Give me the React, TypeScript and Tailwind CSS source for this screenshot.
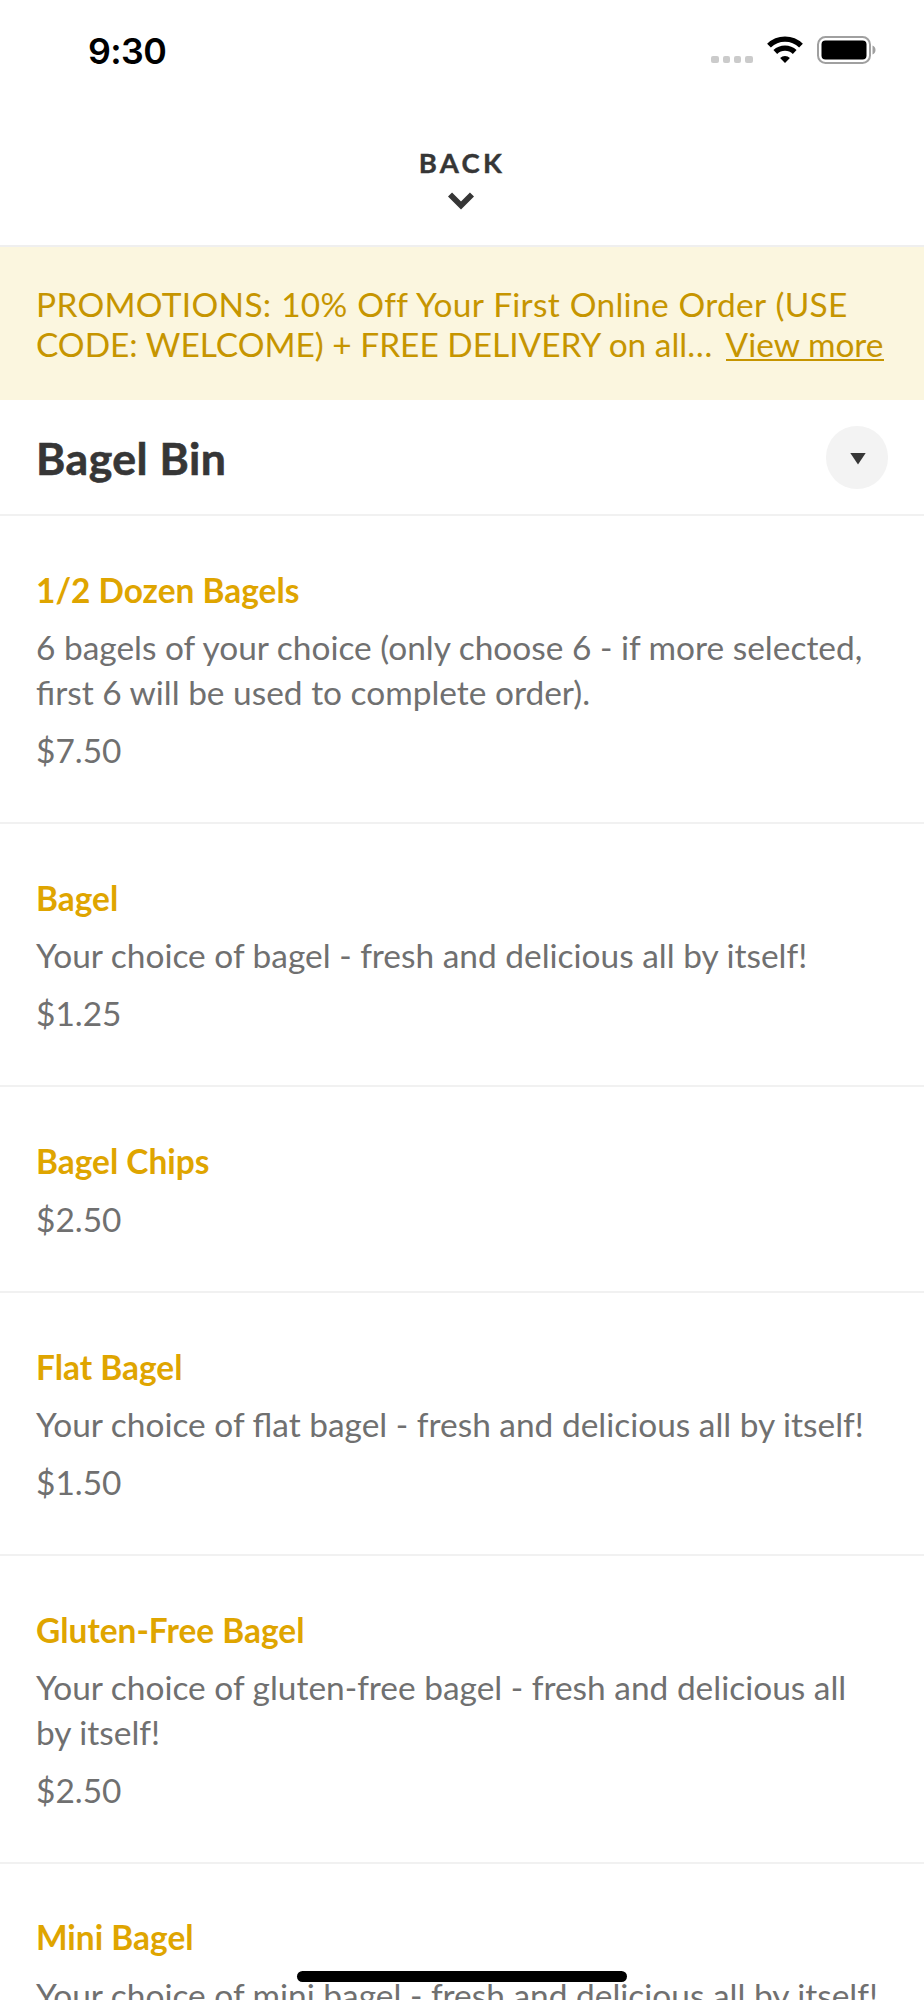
import React from 'react';

interface MenuItem {
  name: string;
  description?: string;
  price: string;
}

const ITEMS: MenuItem[] = [
  {
    name: '1/2 Dozen Bagels',
    description: '6 bagels of your choice (only choose 6 - if more selected, first 6 will be used to complete order).',
    price: '$7.50',
  },
  { name: 'Bagel', description: 'Your choice of bagel - fresh and delicious all by itself!', price: '$1.25' },
  { name: 'Bagel Chips', price: '$2.50' },
  { name: 'Flat Bagel', description: 'Your choice of flat bagel - fresh and delicious all by itself!', price: '$1.50' },
  {
    name: 'Gluten-Free Bagel',
    description: 'Your choice of gluten-free bagel - fresh and delicious all by itself!',
    price: '$2.50',
  },
  { name: 'Mini Bagel', description: 'Your choice of mini bagel - fresh and delicious all by itself!', price: '$1.00' },
];

const StatusBar: React.FC = () => (
  <div className="flex h-[100px] items-center justify-between pl-[88px] pr-[48px]">
    <span className="mt-[3px] font-['Inter',sans-serif] text-[35.8px] leading-none font-semibold text-black tracking-[-0.6px]">9:30</span>
    <div className="flex items-center">
      <div className="mt-[19px] mr-[14.5px] flex gap-[4px]">
        {[0, 1, 2, 3].map(i => (
          <span key={i} className="h-[7.5px] w-[7.3px] rounded-[2px] bg-[#cbcbcb]" />
        ))}
      </div>
      <svg className="mr-[14px]" width="36" height="28" viewBox="0 0 36 28" fill="none" stroke="#000" strokeWidth="5.4">
        <path d="M2 9.6a23 23 0 0 1 32 0" />
        <path d="M8.3 16a14 14 0 0 1 19.4 0" />
        <path d="M18 27l-4.9-4.9a7 7 0 0 1 9.8 0z" fill="#000" stroke="none" />
      </svg>
      <svg width="59" height="28" viewBox="0 0 59 28">
        <rect x="1" y="1" width="52" height="26" rx="7.5" fill="none" stroke="#a0a0a0" strokeWidth="2" />
        <rect x="4.5" y="4.5" width="45" height="19" rx="4" fill="#000" />
        <path d="M55.5 9.5c2 .7 3 2.5 3 4.5s-1 3.8-3 4.5z" fill="#a0a0a0" />
      </svg>
    </div>
  </div>
);

const MenuRow: React.FC<{ item: MenuItem }> = ({ item }) => (
  <li className="border-b-2 border-[#f1f1f1] px-9 pt-[51.9px] pb-[49.4px] text-[33.45px] leading-[44.6px]">
    <h2 className="font-bold text-[#dfa500]">{item.name}</h2>
    {item.description && <p className="mt-[12.8px] text-[#707070]">{item.description}</p>}
    <p className="mt-[13.3px] text-[#707070]">{item.price}</p>
  </li>
);

const App: React.FC = () => (
  <div className="relative h-[2000px] w-[924px] overflow-hidden bg-white font-['Lato',sans-serif]">
    <StatusBar />
    <button className="flex h-[147px] w-full flex-col items-center border-b-2 border-[#efefef] pt-[46px] text-[#363636]">
      <span className="text-[27.5px] leading-[33px] font-bold tracking-[3.3px] [-webkit-text-stroke:0.4px]">BACK</span>
      <svg className="mt-[13px] mr-[3px]" width="26" height="18" viewBox="0 0 26 18" fill="none" stroke="currentColor" strokeWidth="5.8">
        <path d="M2 2.5l11 11 11-11" />
      </svg>
    </button>

    <div className="h-[152.5px] bg-[#fbf6df] px-9 pt-[36.6px] text-[33.45px] leading-[40.2px] text-[#c69500]">
      <p className="whitespace-nowrap tracking-[0.3px] [word-spacing:0.8px]">PROMOTIONS: 10% Off Your First Online Order (USE</p>
      <p className="flex justify-between pr-[4.5px]">
        <span>CODE: WELCOME) + FREE DELIVERY on all…</span>
        <a className="h-[37.2px] border-b-2 border-[#c69500]">View more</a>
      </p>
    </div>

    <div className="flex h-[116.5px] items-center justify-between border-b-2 border-[#f1f1f1] px-9 pt-[1.5px]">
      <h1 className="pt-[1px] text-[44.6px] leading-[54px] font-bold tracking-[0.5px] text-[#363636] [-webkit-text-stroke:0.6px]">Bagel Bin</h1>
      <button className="flex size-[62.5px] items-center justify-center rounded-full bg-[#f3f3f3]">
        <svg className="mt-[3px] ml-[2px]" width="16" height="12" viewBox="0 0 16 12" fill="#363636">
          <path d="M.3 0h15.4L8 11.5z" />
        </svg>
      </button>
    </div>

    <ul>
      {ITEMS.map(item => (
        <MenuRow key={item.name} item={item} />
      ))}
    </ul>

    {/* home indicator */}
    <div className="absolute top-[1970.7px] left-[297px] h-[11.3px] w-[330px] rounded-full bg-black" />
  </div>
);

export default App;
